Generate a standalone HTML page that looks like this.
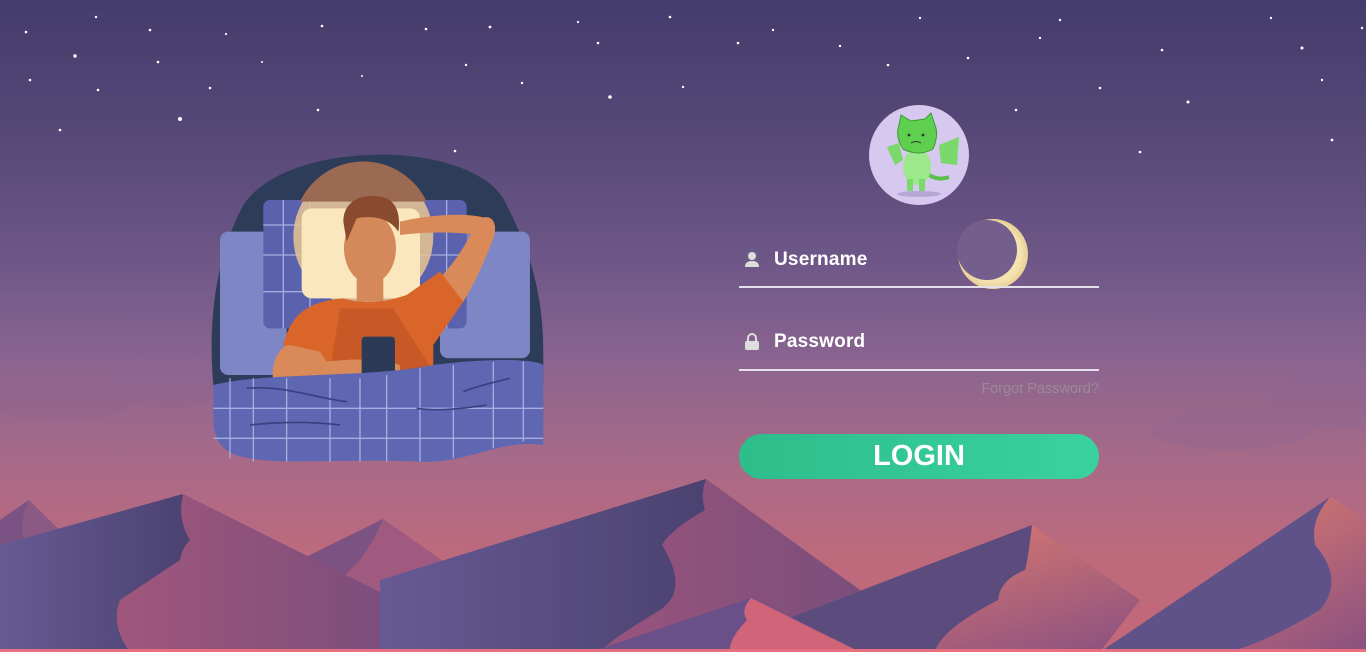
<!DOCTYPE html>
<html><head><meta charset="utf-8"><style>
html,body{margin:0;padding:0;width:1366px;height:652px;overflow:hidden}
body{position:relative;background:linear-gradient(180deg,#443c6c 0%,#554877 20%,#6e5787 40%,#8a6490 55%,#a66a88 70%,#bd6a7d 85%,#c46878 100%);font-family:"Liberation Sans",sans-serif}
svg{position:absolute;left:0;top:0}
.f{position:absolute;left:739px;width:360px;border-bottom:2px solid #e6e0ea}
.lbl{position:absolute;left:35px;color:#fff;font-weight:bold;font-size:19px;letter-spacing:0.2px}
.forgot{position:absolute;left:739px;width:360px;top:381px;text-align:right;color:#9a8a96;font-size:14.5px}
.btn{position:absolute;left:739px;top:434px;width:360px;height:45px;border-radius:23px;background:linear-gradient(90deg,#2ebd8b,#39d29f);color:#fff;font-weight:bold;font-size:29px;text-align:center;line-height:45px}
.av{position:absolute;left:869px;top:105px;width:100px;height:100px;border-radius:50%;background:#d6c8ee}
</style></head><body>
<svg width="1366" height="652" viewBox="0 0 1366 652">
<defs>
<linearGradient id="pk" x1="0" x2="1"><stop offset="0" stop-color="#b05a7c"/><stop offset="1" stop-color="#6c4a7c"/></linearGradient>
<linearGradient id="dk" x1="0" x2="1"><stop offset="0" stop-color="#675a94"/><stop offset="1" stop-color="#4a4270"/></linearGradient>
<linearGradient id="or" x1="0" y1="0" x2="1" y2="1"><stop offset="0" stop-color="#f5876a"/><stop offset="1" stop-color="#8a5080"/></linearGradient>
<radialGradient id="moon" cx="0.5" cy="0.5" r="0.5"><stop offset="0.8" stop-color="#f4e2b0"/><stop offset="1" stop-color="#e8cf95"/></radialGradient>
</defs>
<g fill="#fff">
<circle cx="26" cy="32" r="1.3"/><circle cx="96" cy="17" r="1.2"/><circle cx="150" cy="30" r="1.3"/><circle cx="226" cy="34" r="1.1"/><circle cx="322" cy="26" r="1.3"/><circle cx="426" cy="29" r="1.3"/><circle cx="490" cy="27" r="1.4"/><circle cx="578" cy="22" r="1.1"/><circle cx="670" cy="17" r="1.3"/><circle cx="75" cy="56" r="1.7"/><circle cx="158" cy="62" r="1.3"/><circle cx="262" cy="62" r="1"/><circle cx="362" cy="76" r="1"/><circle cx="466" cy="65" r="1.2"/><circle cx="522" cy="83" r="1.2"/><circle cx="598" cy="43" r="1.3"/><circle cx="683" cy="87" r="1.2"/><circle cx="738" cy="43" r="1.3"/><circle cx="30" cy="80" r="1.3"/><circle cx="98" cy="90" r="1.3"/><circle cx="210" cy="88" r="1.3"/><circle cx="318" cy="110" r="1.3"/><circle cx="180" cy="119" r="2"/><circle cx="60" cy="130" r="1.3"/><circle cx="610" cy="97" r="1.8"/><circle cx="455" cy="151" r="1.3"/><circle cx="888" cy="65" r="1.3"/><circle cx="968" cy="58" r="1.3"/><circle cx="1016" cy="110" r="1.3"/><circle cx="1100" cy="88" r="1.3"/><circle cx="1162" cy="50" r="1.3"/><circle cx="1188" cy="102" r="1.5"/><circle cx="1140" cy="152" r="1.3"/><circle cx="1271" cy="18" r="1.2"/><circle cx="1302" cy="48" r="1.5"/><circle cx="1322" cy="80" r="1.2"/><circle cx="1332" cy="140" r="1.4"/><circle cx="1362" cy="28" r="1.2"/><circle cx="773" cy="30" r="1.2"/><circle cx="840" cy="46" r="1.2"/><circle cx="920" cy="18" r="1.2"/><circle cx="1060" cy="20" r="1.2"/><circle cx="1040" cy="38" r="1.2"/>
</g>
<g fill="#8e6594" opacity="0.3">
<ellipse cx="170" cy="380" rx="60" ry="28"/><ellipse cx="60" cy="400" rx="70" ry="22"/><ellipse cx="1330" cy="400" rx="60" ry="30"/><ellipse cx="1230" cy="430" rx="80" ry="20"/>
</g>
<circle cx="993" cy="254" r="35" fill="url(#moon)"/>
<circle cx="987" cy="250" r="30" fill="#735e8c"/>
<path d="M0,520 L29,500 L90,560 L0,600Z" fill="#8a5a84"/>
<path d="M29,500 Q18,520 25,545 L0,560 L0,520Z" fill="#7a5283"/>
<path d="M300,560 L383,519 L470,580 L360,620Z" fill="#a05a80"/>
<path d="M300,560 L383,519 Q375,540 360,560 L330,590Z" fill="#7c5282"/>
<path d="M0,545 L183,494 L500,652 L0,652Z" fill="url(#pk)"/>
<path d="M0,545 L183,494 Q177,520 190,540 Q182,548 180,560 Q150,580 120,600 Q110,625 130,652 L0,652Z" fill="url(#dk)"/>
<path d="M380,580 L706,479 L860,590 L1000,652 L380,652Z" fill="url(#pk)"/>
<path d="M380,580 L706,479 Q700,495 705,510 Q670,530 662,545 Q690,590 660,610 Q610,640 600,652 L380,652Z" fill="url(#dk)"/>
<path d="M700,652 L1032,525 L1140,600 L1100,652Z" fill="url(#or)"/>
<path d="M700,652 L1032,525 Q1028,560 1025,570 Q1000,580 998,600 Q940,630 935,652Z" fill="#5c4c7e"/>
<path d="M620,652 L751,598 L860,652Z" fill="#d06478"/>
<path d="M590,652 L751,598 Q740,610 747,620 Q728,640 730,652Z" fill="#6a5088"/>
<path d="M1100,652 L1330,497 L1366,520 L1366,652Z" fill="url(#or)"/>
<path d="M1100,652 L1330,497 Q1310,520 1315,545 Q1345,580 1320,610 Q1270,640 1230,652Z" fill="#5e5288"/>
<rect x="0" y="649" width="1366" height="3" fill="#e86f7f"/>
<g transform="translate(200,145) scale(0.3333)">
<path d="M40,720 C20,500 60,320 120,200 C160,110 300,40 500,30 C700,20 880,80 920,180 C960,260 1030,400 1030,620 L1030,720Z" fill="#2d3c58"/>
<rect x="60" y="260" width="200" height="430" rx="25" fill="#7e86c6"/>
<rect x="720" y="260" width="270" height="380" rx="25" fill="#7e86c6"/>
<rect x="190" y="165" width="610" height="385" rx="20" fill="#5a62ae"/>
<g stroke="#a5aee0" stroke-width="4" fill="none"><path d="M190,240H800M190,330H800M190,440H800M250,165V550M330,165V550M740,165V550"/></g>
<circle cx="490" cy="275" r="210" fill="#e7c592" opacity="0.85"/>
<path d="M300,170 A210,210 0 0 1 680,170Z" fill="#9c6a52"/>
<rect x="305" y="190" width="355" height="270" rx="30" fill="#fbe7bd"/>
<path d="M700,420 C760,360 800,300 830,230 C860,200 900,220 880,280 C850,360 820,420 790,470Z" fill="#d98a58"/>
<path d="M600,230 C680,210 800,200 860,220 L840,270 C760,260 680,260 600,270Z" fill="#d98a58"/>
<ellipse cx="510" cy="310" rx="78" ry="105" fill="#d5895a"/>
<path d="M430,230 C430,160 500,140 560,160 C600,180 600,230 595,260 C570,220 520,210 470,220 L440,290Z" fill="#8a4a2e"/>
<rect x="470" y="380" width="80" height="90" fill="#d5895a"/>
<path d="M250,600 C270,520 310,470 430,460 C500,480 560,470 620,450 L720,380 L790,470 L700,600 L700,680 L380,680Z" fill="#d9652a"/>
<path d="M420,490 L580,490 L700,680 L390,680Z" fill="#c05426" opacity="0.7"/>
<path d="M220,720 C210,650 240,600 270,600 L360,620 L380,650 C460,640 540,640 600,660 L600,710 C500,730 350,740 220,720Z" fill="#d98a58"/>
<rect x="485" y="575" width="100" height="150" rx="10" fill="#2c3a55"/>
<path d="M40,720 C200,680 500,700 700,660 C850,640 1000,640 1030,660 L1030,900 C900,880 800,960 650,950 C450,940 250,960 150,940 C80,930 40,900 40,820Z" fill="#5f67b3"/>
<g stroke="#a5aee0" stroke-width="4" fill="none"><path d="M40,790H1030M40,880H1030M90,700V940M160,700V950M260,700V950M390,700V950M480,700V950M560,690V950M660,670V950M760,660V940M880,650V910M970,650V890"/></g>
<g stroke="#3c3f80" stroke-width="5" fill="none"><path d="M140,730C250,720 350,760 440,770M150,840C250,830 330,830 420,840M790,740C840,720 890,710 930,700M650,790C720,800 800,790 860,780"/></g>
</g>
</svg>
<div class="av"><svg width="100" height="100" viewBox="0 0 100 100">
<ellipse cx="50" cy="89" rx="22" ry="3" fill="#b6a6d4"/>
<path d="M70,40 L90,32 L88,60 L72,58Z" fill="#7bd86a"/>
<path d="M30,38 L18,42 L26,60 L34,55Z" fill="#7bd86a"/>
<path d="M60,70 Q70,76 80,72" stroke="#5cc04e" stroke-width="4" fill="none"/>
<ellipse cx="48" cy="62" rx="14" ry="18" fill="#9de88a"/>
<path d="M30,20 L32,10 L42,16 L56,14 L62,8 L66,20 Q70,30 64,44 Q50,52 34,44 Q26,32 30,20Z" fill="#5fcf4f" stroke="#3f9a34" stroke-width="1"/>
<rect x="38" y="74" width="6" height="12" fill="#7bd86a"/><rect x="50" y="74" width="6" height="12" fill="#7bd86a"/>
<circle cx="40" cy="30" r="1.4" fill="#333"/><circle cx="54" cy="30" r="1.4" fill="#333"/>
<path d="M42,38 Q47,35 52,38" stroke="#333" stroke-width="1" fill="none"/>
</svg></div>
<div class="f" style="top:246px;height:40px">
<svg width="16" height="16" viewBox="0 0 16 16" style="left:5px;top:5px"><circle cx="8" cy="5" r="4" fill="#ddd"/><path d="M1,16 Q1,10 8,10 Q15,10 15,16Z" fill="#ddd"/></svg>
<div class="lbl" style="top:3px">Username</div></div>
<div class="f" style="top:328px;height:41px">
<svg width="16" height="18" viewBox="0 0 16 18" style="left:5px;top:5px"><path d="M4,8 V5 A4,4 0 0 1 12,5 V8" stroke="#ddd" stroke-width="2" fill="none"/><rect x="1" y="8" width="14" height="9" rx="2" fill="#ddd"/></svg>
<div class="lbl" style="top:3px">Password</div></div>
<div class="forgot">Forgot Password?</div>
<div class="btn">LOGIN</div>
</body></html>
